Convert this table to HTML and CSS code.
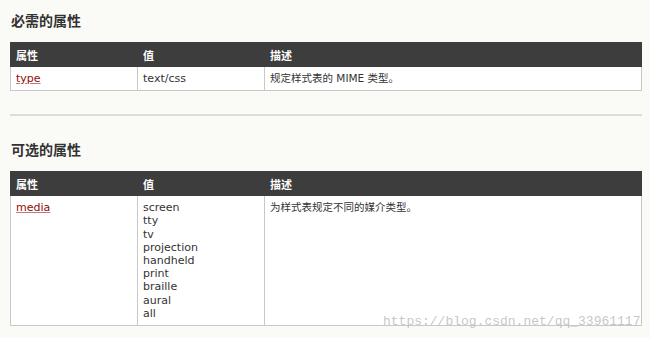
FILE: index.html
```html
<!DOCTYPE html>
<html lang="zh-CN">
<head>
<meta charset="utf-8">
<title>style 元素属性</title>
<link rel="stylesheet" href="styles.css">
</head>
<body>
<div class="page">
  <h2 class="section-title">必需的属性</h2>
  <table class="attr-table">
    <colgroup><col class="c-name"><col class="c-value"><col class="c-desc"></colgroup>
    <tr><th>属性</th><th>值</th><th>描述</th></tr>
    <tr>
      <td><a class="attr-link" href="#type">type</a></td>
      <td>text/css</td>
      <td>规定样式表的 MIME 类型。</td>
    </tr>
  </table>

  <hr class="divider">

  <h2 class="section-title">可选的属性</h2>
  <table class="attr-table">
    <colgroup><col class="c-name"><col class="c-value"><col class="c-desc"></colgroup>
    <tr><th>属性</th><th>值</th><th>描述</th></tr>
    <tr>
      <td><a class="attr-link" href="#media">media</a></td>
      <td>screen<br>tty<br>tv<br>projection<br>handheld<br>print<br>braille<br>aural<br>all</td>
      <td>为样式表规定不同的媒介类型。</td>
    </tr>
  </table>
</div>
<div class="watermark">https://blog.csdn.net/qq_33961117</div>
</body>
</html>
```

FILE: styles.css
```css
html, body {
  margin: 0;
  padding: 0;
  background: #fafaf6;
}

body {
  font-family: "DejaVu Sans", Verdana, "Noto Sans CJK SC", sans-serif;
  font-size: 11px;
  color: #333;
  position: relative;
  height: 338px;
  overflow: hidden;
}

.page {
  padding: 0 8px 0 10px;
  width: 632px;
}

.section-title {
  font-family: "Noto Sans CJK SC", sans-serif;
  font-size: 14px;
  font-weight: bold;
  color: #333;
  margin: 0;
  padding: 10px 0 0 1px;
  line-height: 20px;
  height: 32px;
}

.attr-table {
  width: 632px;
  border-collapse: collapse;
  table-layout: fixed;
  background: #fff;
}

.c-name, .c-value { width: 127px; }

.attr-table th {
  background: #3d3d3d;
  color: #fff;
  font-family: "Noto Sans CJK SC", sans-serif;
  font-size: 11px;
  font-weight: bold;
  text-align: left;
  height: 24px;
  padding: 0 5px;
  border: 1px solid #3d3d3d;
  box-sizing: border-box;
  line-height: 14px;
}

.attr-table td {
  border: 1px solid #c8c8c8;
  padding: 5px 5px 5px 5px;
  vertical-align: top;
  line-height: 13.2px;
  font-family: "DejaVu Sans", "Noto Sans CJK SC", sans-serif;
}

.attr-table td:last-child {
  font-size: 10.5px;
}

.attr-link {
  color: #900b09;
  text-decoration: underline;
  text-decoration-color: #c57a7a;
}

.divider {
  border: 0;
  border-top: 2px solid #dcdcd8;
  margin: 23px 0 0 0;
  height: 0;
  width: 632px;
}

.divider + .section-title {
  padding-top: 23px;
}

.watermark {
  position: absolute;
  left: 383px;
  top: 314px;
  font-family: "Liberation Mono", monospace;
  font-size: 13px;
  color: rgba(180, 180, 180, 0.75);
  letter-spacing: 0;
}
```
